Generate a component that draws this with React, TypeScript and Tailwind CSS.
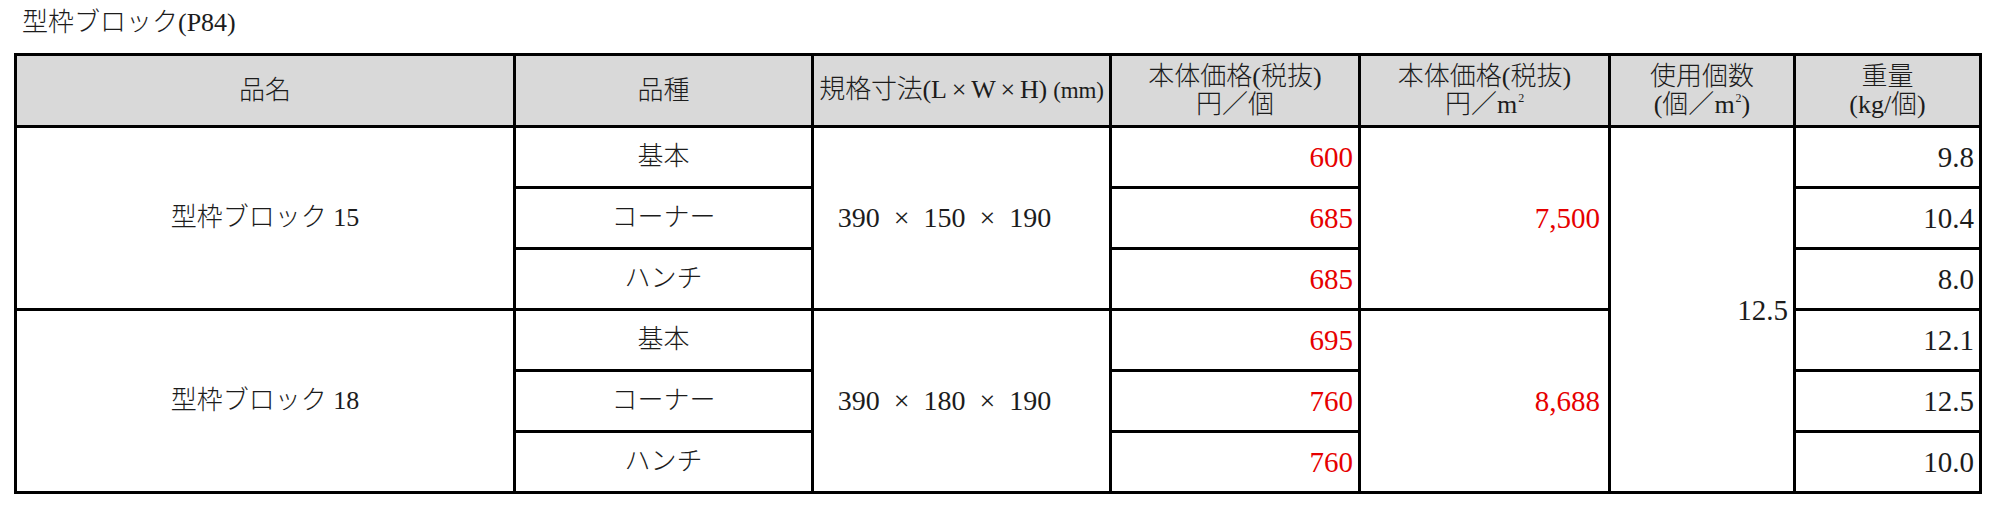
import React from "react";

type Row = { kind: string; price: string; weight: string };

const groups: { name: string; size: string[]; perM2: string; rows: Row[] }[] = [
  {
    name: "型枠ブロック 15",
    size: ["390", "150", "190"],
    perM2: "7,500",
    rows: [
      { kind: "基本", price: "600", weight: "9.8" },
      { kind: "コーナー", price: "685", weight: "10.4" },
      { kind: "ハンチ", price: "685", weight: "8.0" },
    ],
  },
  {
    name: "型枠ブロック 18",
    size: ["390", "180", "190"],
    perM2: "8,688",
    rows: [
      { kind: "基本", price: "695", weight: "12.1" },
      { kind: "コーナー", price: "760", weight: "12.5" },
      { kind: "ハンチ", price: "760", weight: "10.0" },
    ],
  },
];

const th = "border-[3px] border-black bg-[#d9d9d9] font-light text-center align-middle leading-[28px]";
const td = "border-[3px] border-black align-middle leading-[28px]";
const num = "text-[29px]";

function M2() {
  return (
    <>
      m<sup className="text-[12px] relative -top-[11px] ml-[1px]">2</sup>
    </>
  );
}

export default function App() {
  return (
    <div className="w-[1998px] h-[508px] bg-white text-[#1c1c1c] font-['Liberation_Serif','Noto_Sans_CJK_JP',serif] text-[26px]">
      {/* Title */}
      <div className="h-[53px] pt-[8px] pl-[22px] leading-[30px] font-light">型枠ブロック(P84)</div>

      <table className="ml-[14px] w-[1968px] table-fixed border-collapse">
        <colgroup>
          <col className="w-[499px]" />
          <col className="w-[298px]" />
          <col className="w-[298px]" />
          <col className="w-[249px]" />
          <col className="w-[250px]" />
          <col className="w-[185px]" />
          <col className="w-[186px]" />
        </colgroup>
        <thead>
          <tr className="h-[72px]">
            <th className={th}>品名</th>
            <th className={th}>品種</th>
            <th className={`${th} px-0 whitespace-nowrap tracking-[-0.2px]`}>
              規格寸法(L<span className="mx-[5px]">×</span>W<span className="mx-[5px]">×</span>H) <span className="text-[23px]">(mm)</span>
            </th>
            <th className={th}>
              本体価格(税抜)
              <br />
              円／個
            </th>
            <th className={th}>
              本体価格(税抜)
              <br />
              円／<M2 />
            </th>
            <th className={th}>
              使用個数
              <br />
              (個／<M2 />)
            </th>
            <th className={th}>
              重量
              <br />
              (kg/個)
            </th>
          </tr>
        </thead>
        <tbody className="font-light">
          {groups.map((g, gi) =>
            g.rows.map((r, ri) => (
              <tr key={`${gi}-${ri}`} className="h-[61px]">
                {ri === 0 && (
                  <td rowSpan={3} className={`${td} text-center`}>
                    {g.name}
                  </td>
                )}
                <td className={`${td} text-center`}>{r.kind}</td>
                {ri === 0 && (
                  <td rowSpan={3} className={`${td} text-[28px] text-center pr-[34px] whitespace-nowrap`}>
                    {g.size[0]}
                    <span className="mx-[14px]">×</span>
                    {g.size[1]}
                    <span className="mx-[14px]">×</span>
                    {g.size[2]}
                  </td>
                )}
                <td className={`${td} ${num} text-right pr-[5px] text-[#e60000]`}>{r.price}</td>
                {ri === 0 && (
                  <td rowSpan={3} className={`${td} ${num} text-right pr-[8px] text-[#e60000]`}>
                    {g.perM2}
                  </td>
                )}
                {gi === 0 && ri === 0 && (
                  <td rowSpan={6} className={`${td} ${num} text-right pr-[5px]`}>
                    12.5
                  </td>
                )}
                <td className={`${td} ${num} text-right pr-[5px]`}>{r.weight}</td>
              </tr>
            ))
          )}
        </tbody>
      </table>
    </div>
  );
}
